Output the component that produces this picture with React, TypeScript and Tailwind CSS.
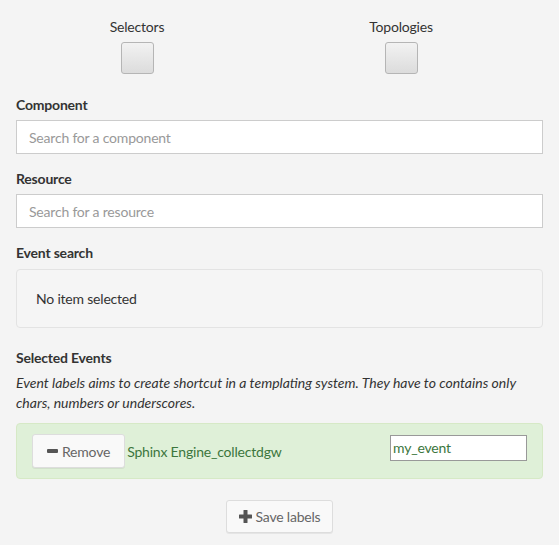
import { useState } from "react";

const font = { fontFamily: "Lato, 'Open Sans', sans-serif" };

const App = () => {
  const [label, setLabel] = useState("my_event");

  return (
    <div className="w-[559px] h-[545px] bg-[#f4f4f4] text-[#333] text-[14px] tracking-[-0.2px] overflow-hidden" style={font}>
      {/* toggles */}
      <div className="flex pl-[5px] pt-[17px]">
        <div className="w-[264px] flex flex-col items-center">
          <span className="leading-5">Selectors</span>
          <button className="mt-[5px] w-[33px] h-[32px] rounded-[3px] border border-[#b5b5b5] bg-gradient-to-b from-[#f2f2f2] to-[#dcdcdc]" />
        </div>
        <div className="w-[264px] flex flex-col items-center">
          <span className="leading-5">Topologies</span>
          <button className="mt-[5px] w-[33px] h-[32px] rounded-[3px] border border-[#b5b5b5] bg-gradient-to-b from-[#f2f2f2] to-[#dcdcdc]" />
        </div>
      </div>

      <div className="px-[16px]">
        <label className="block font-bold mt-[21px] leading-5">Component</label>
        <input
          className="block mt-[5px] w-full h-[34px] px-[12px] border border-[#ccc] bg-white outline-none placeholder:text-[#999]"
          placeholder="Search for a component"
        />

        <label className="block font-bold mt-[15px] leading-5">Resource</label>
        <input
          className="block mt-[5px] w-full h-[34px] px-[12px] border border-[#ccc] bg-white outline-none placeholder:text-[#999]"
          placeholder="Search for a resource"
        />

        <label className="block font-bold mt-[15px] leading-5">Event search</label>
        <div className="mt-[6px] h-[59px] rounded-[4px] border border-[#e3e3e3] bg-[#f5f5f5] flex items-center px-[19px]">
          No item selected
        </div>

        <label className="block font-bold mt-[20px] leading-5">Selected Events</label>
        <p className="italic mt-[5px] leading-5 tracking-normal">
          Event labels aims to create shortcut in a templating system. They have to contains only chars, numbers or
          underscores.
        </p>

        <div className="mt-[10px] h-[56px] rounded-[4px] border border-[#d6e9c6] bg-[#dff0d8] flex items-center pl-[15px] pr-[15px]">
          <button className="h-[34px] px-[14px] flex items-center gap-[4px] rounded-[3px] border border-[#ddd] bg-[#f9f9f9] text-[#666] shadow-[0_1px_0_rgba(0,0,0,0.06)]">
            <span className="w-[11px] h-[4px] bg-[#555] rounded-[1px]" />
            Remove
          </button>
          <span className="ml-[2px] text-[#3c763d]">Sphinx Engine_collectdgw</span>
          <input
            value={label}
            onChange={(e) => setLabel(e.target.value)}
            className="ml-auto mb-[7px] w-[137px] h-[26px] px-[2px] border border-[#999] bg-white text-[#3c763d] outline-none"
          />
        </div>

        <div className="flex justify-center mt-[21px]">
          <button className="h-[33px] px-[12px] flex items-center gap-[4px] rounded-[3px] border border-[#ddd] bg-[#f9f9f9] text-[#666] shadow-[0_1px_0_rgba(0,0,0,0.06)]">
            <svg width="13" height="13" viewBox="0 0 13 13">
              <rect x="4.5" y="0" width="4" height="13" rx="0.5" fill="#555" />
              <rect x="0" y="4.5" width="13" height="4" rx="0.5" fill="#555" />
            </svg>
            Save labels
          </button>
        </div>
      </div>
    </div>
  );
};

export default App;
